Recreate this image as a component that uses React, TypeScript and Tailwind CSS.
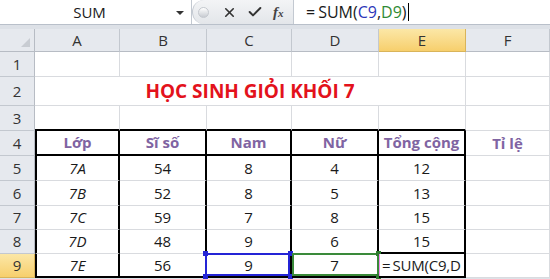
import { X, Check } from 'lucide-react'

const COLS = ['A', 'B', 'C', 'D', 'E', 'F']
const ROW_H = ['h-[25px]', 'h-[29px]', 'h-[25px]', 'h-[25px]', 'h-[25px]', 'h-[25px]', 'h-[24px]', 'h-[24px]', 'h-[24px]']

const HEAD = ['Lớp', 'Sĩ số', 'Nam', 'Nữ', 'Tổng cộng', 'Tỉ lệ']
const DATA = [
  ['7A', '54', '8', '4', '12'],
  ['7B', '52', '8', '5', '13'],
  ['7C', '59', '7', '8', '15'],
  ['7D', '48', '9', '6', '15'],
  ['7E', '56', '9', '7', ''],
]

const grid = 'border-r border-b border-r-[#d9dbdf] border-b-[#d9dbdf]'

function cellBorder(row: number, col: number) {
  // row 1-9, col 0-5 (A-F)
  const inTable = row >= 4 && col <= 4
  const parts: string[] = []
  if (inTable) {
    parts.push('border-r-2 border-r-black')
    if (col === 0) parts.push('border-l-2 border-l-black')
  } else {
    parts.push('border-r border-r-[#d9dbdf]')
  }
  const thickBottom = col <= 4 && (row === 3 || row === 4 || row === 9 || (row === 8 && col === 4))
  parts.push(thickBottom ? 'border-b-2 border-b-black' : 'border-b border-b-[#d9dbdf]')
  return parts.join(' ')
}

function Handle({ pos, color }: { pos: string; color: string }) {
  return <span className={`absolute h-[5px] w-[5px] ${pos} ${color}`} />
}

export default function App() {
  return (
    <div
      className="h-[279px] w-[550px] overflow-hidden bg-[#dde1e7] text-[#1a1a1a]"
      style={{ fontFamily: '"Open Sans", "Noto Sans", sans-serif' }}
    >
      {/* formula bar */}
      <div className="flex h-[25px] items-stretch border-b border-[#b9c0ca] bg-white">
        <div className="relative flex w-[192px] items-center justify-center border-r border-[#c3c9d1] text-[15px]">
          <span className="-ml-[12px]">SUM</span>
          <span className="absolute right-[7px] top-[11px] h-0 w-0 border-x-[4px] border-t-[4px] border-x-transparent border-t-[#333]" />
        </div>
        <div className="flex w-[101px] items-center rounded-l-full border-l border-[#c3c9d1] bg-gradient-to-b from-[#f3f4f6] to-[#e3e6ea] pl-[5px]">
          <span className="h-[11px] w-[11px] rounded-full border border-[#c4c8ce] bg-gradient-to-b from-[#ffffff] to-[#c8ccd2]" />
          <X className="ml-[13px] h-[15px] w-[15px] text-[#333]" strokeWidth={2.6} />
          <Check className="ml-[10px] h-[16px] w-[16px] text-[#333]" strokeWidth={3} />
          <span className="ml-[10px] text-[15px] font-bold italic text-[#444]" style={{ fontFamily: '"Liberation Serif", serif' }}>
            f<span className="text-[11px]">x</span>
          </span>
        </div>
        <div className="flex flex-1 items-center border-l border-[#c3c9d1] pl-[12px] text-[16px]">
          <span className="mr-[3px]">=</span>
          <span>SUM(</span>
          <span className="text-[#2b36b8]">C9</span>
          <span>,</span>
          <span className="text-[#2f8a34]">D9</span>
          <span>)</span>
          <span className="ml-[1px] h-[18px] w-[1px] bg-black" />
        </div>
      </div>

      <div className="h-[4px]" />

      {/* sheet */}
      <div className="grid grid-cols-[35px_85px_87px_85px_87px_87px_84px] text-[15px]">
        {/* column headers */}
        <div className="relative h-[23px] border-r border-b border-r-[#b7bcc4] border-b-[#b7bcc4] bg-[#e6e9ee]">
          <span className="absolute bottom-[4px] right-[4px] h-0 w-0" style={{ borderBottom: '9px solid #c8ccd2', borderLeft: '9px solid transparent' }} />
        </div>
        {COLS.map((c) => (
          <div
            key={c}
            className={
              c === 'E'
                ? 'flex h-[23px] items-center justify-center border-r border-b border-r-[#d9b45a] border-b-[#d9b45a] bg-gradient-to-b from-[#fbe7a6] to-[#f7cf6c] text-[#333]'
                : 'flex h-[23px] items-center justify-center border-r border-b border-r-[#c3c8cf] border-b-[#b7bcc4] bg-[#e6e9ee] text-[#333]'
            }
          >
            {c}
          </div>
        ))}

        {ROW_H.map((h, i) => {
          const row = i + 1
          return [
            <div
              key={`h${row}`}
              className={
                row === 9
                  ? `flex ${h} items-center justify-center border-r border-b border-r-[#d9b45a] border-b-[#d9b45a] bg-gradient-to-b from-[#fbe7a6] to-[#f7cf6c] text-[#333]`
                  : `flex ${h} items-center justify-center border-r border-b border-r-[#b7bcc4] border-b-[#c3c8cf] bg-[#e6e9ee] text-[#333]`
              }
            >
              {row}
            </div>,
            ...COLS.map((_, col) => {
              let content: React.ReactNode = null
              let extra = ''
              if (row === 2 && col === 0) {
                return (
                  <div
                    key={`c${row}-${col}`}
                    className={`col-span-5 flex ${h} items-center justify-center ${grid} bg-white text-[19px] font-bold text-[#e3121c]`}
                  >
                    HỌC SINH GIỎI KHỐI 7
                  </div>
                )
              }
              if (row === 2 && col >= 1 && col <= 4) return null
              if (row === 4) {
                content = HEAD[col]
                extra = 'font-bold text-[#8064a2]'
              }
              if (row >= 5 && col <= 4) {
                content = DATA[row - 5][col]
                if (col === 0) extra = 'italic'
              }
              const border = (row === 4 && col === 5) || row === 2 ? grid : cellBorder(row, col)

              if (row === 9 && col === 2) {
                return (
                  <div key={`c${row}-${col}`} className={`relative flex ${h} items-center justify-center ${border} bg-white`}>
                    <span className="pointer-events-none absolute -left-[2px] -top-[1px] bottom-0 right-0 border-2 border-[#2424d6]" />
                    <Handle pos="-left-[4px] -top-[3px]" color="bg-[#2424d6]" />
                    <Handle pos="-right-[3px] -top-[3px]" color="bg-[#2424d6]" />
                    <Handle pos="-left-[4px] -bottom-[3px]" color="bg-[#2424d6]" />
                    <Handle pos="-right-[3px] -bottom-[3px]" color="bg-[#2424d6]" />
                    {content}
                  </div>
                )
              }
              if (row === 9 && col === 3) {
                return (
                  <div key={`c${row}-${col}`} className={`relative flex ${h} items-center justify-center ${border} bg-white`}>
                    <span className="pointer-events-none absolute left-0 -top-[1px] bottom-0 -right-[2px] border-2 border-[#3a8a3a]" />
                    <Handle pos="-right-[4px] -top-[3px]" color="bg-[#2f7a2f]" />
                    <Handle pos="-right-[4px] -bottom-[3px]" color="bg-[#2f7a2f]" />
                    {content}
                  </div>
                )
              }
              if (row === 9 && col === 4) {
                return (
                  <div key={`c${row}-${col}`} className={`relative flex ${h} items-center overflow-hidden ${border} bg-white`}>
                    <span className="absolute bottom-0 left-0 top-0 w-[1px] bg-[#f08cf0]" />
                    <span className="whitespace-nowrap pl-[3px] text-[15px] tracking-[-0.2px]">
                      <span className="mr-[2px]">=</span>SUM(C9,D
                    </span>
                  </div>
                )
              }
              return (
                <div key={`c${row}-${col}`} className={`flex ${h} items-center justify-center ${border} bg-white ${extra}`}>
                  {content}
                </div>
              )
            }),
          ]
        })}
      </div>
    </div>
  )
}
